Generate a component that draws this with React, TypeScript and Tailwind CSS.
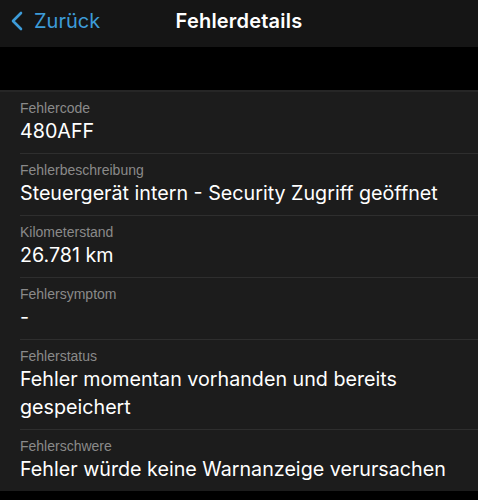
const rows: { label: string; value: string }[] = [
  { label: 'Fehlercode', value: '480AFF' },
  { label: 'Fehlerbeschreibung', value: 'Steuergerät intern - Security Zugriff geöffnet' },
  { label: 'Kilometerstand', value: '26.781 km' },
  { label: 'Fehlersymptom', value: '-' },
  { label: 'Fehlerstatus', value: 'Fehler momentan vorhanden und bereits gespeichert' },
  { label: 'Fehlerschwere', value: 'Fehler würde keine Warnanzeige verursachen' },
];

export default function App() {
  return (
    <div
      className="w-[478px] h-[500px] bg-black overflow-hidden"
      style={{ fontFamily: '"Liberation Sans", Arial, sans-serif' }}
    >
      {/* Nav bar */}
      <div className="relative h-[47px] bg-[#151515] flex items-center pb-[6px] font-['Inter',sans-serif]">
        <div className="flex items-center pl-[9px] text-[#3d9bd8]">
          <svg width="16" height="20" viewBox="0 0 16 20" fill="none">
            <path d="M12 2 L4 10 L12 18" stroke="currentColor" strokeWidth="2.6" strokeLinecap="round" strokeLinejoin="round" />
          </svg>
          <span className="ml-[9px] text-[20px]">Zurück</span>
        </div>
        <div className="absolute inset-0 flex items-center justify-center pb-[6px]">
          <span className="text-white text-[20px] font-semibold tracking-[0.2px]">Fehlerdetails</span>
        </div>
      </div>

      <div className="h-[43px] bg-black" />

      {/* List */}
      <div className="bg-[#1c1c1c] border-t-2 border-[#262626]">
        {rows.map((r, i) => (
          <div key={r.label} className="pl-5">
            <div className={`pr-4 pt-[7px] pb-[8px] ${i < rows.length - 1 ? 'border-b border-[#2e2e2e]' : ''}`}>
              <div className="text-[14px] leading-[18px] text-[#8a8a8a]">{r.label}</div>
              <div className="text-[19.7px] leading-[28px] text-white font-['Inter',sans-serif]">{r.value}</div>
            </div>
          </div>
        ))}
      </div>
    </div>
  );
}
